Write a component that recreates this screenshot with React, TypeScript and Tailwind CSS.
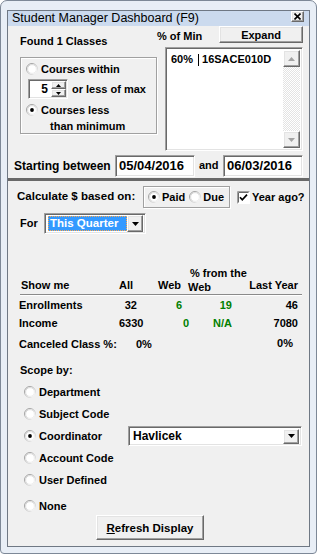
import React from 'react';

const raised =
  'bg-[#f0f0f0] border border-t-white border-l-white border-r-[#696969] border-b-[#696969] shadow-[inset_-1px_-1px_0_#a0a0a0,inset_1px_1px_0_#e3e3e3]';
const sunken =
  'bg-white border border-t-[#a0a0a0] border-l-[#a0a0a0] border-r-white border-b-white shadow-[inset_1px_1px_0_#696969,inset_-1px_-1px_0_#e3e3e3]';
const etched = 'border border-[#a0a0a0] shadow-[1px_1px_0_#ffffff,inset_1px_1px_0_#ffffff]';

const Radio = ({ checked = false }: { checked?: boolean }) => (
  <svg width="12" height="12" viewBox="0 0 12 12" className="shrink-0">
    <defs>
      <linearGradient id="rgOuter" x1="0" y1="0" x2="1" y2="1">
        <stop offset="0" stopColor="#8c8c8c" />
        <stop offset="0.55" stopColor="#c4c4c4" />
        <stop offset="1" stopColor="#ffffff" />
      </linearGradient>
      <linearGradient id="rgInner" x1="0" y1="0" x2="1" y2="1">
        <stop offset="0" stopColor="#d0d0d0" />
        <stop offset="1" stopColor="#f4f4f4" />
      </linearGradient>
    </defs>
    <circle cx="6" cy="6" r="5.5" fill="#ffffff" stroke="url(#rgOuter)" />
    <circle cx="6" cy="6" r="4.4" fill="none" stroke="url(#rgInner)" />
    {checked && <circle cx="6" cy="6" r="1.9" fill="#000000" />}
  </svg>
);

const Checkbox = () => (
  <svg width="13" height="13" viewBox="0 0 13 13" className="shrink-0">
    <rect x="0" y="0" width="13" height="13" fill="#ffffff" />
    <path d="M0.5 12.5 V0.5 H12.5" stroke="#a0a0a0" fill="none" />
    <path d="M1.5 11.5 V1.5 H11.5" stroke="#696969" fill="none" />
    <path d="M3 6.2 L5.3 8.8 L10 3.6" stroke="#000000" strokeWidth="1.7" fill="none" />
  </svg>
);

const Tri = ({ up = false, color = '#000000' }: { up?: boolean; color?: string }) => (
  <svg width="7" height="4" viewBox="0 0 7 4">
    <path d={up ? 'M0 4 L3.5 0 L7 4 Z' : 'M0 0 L7 0 L3.5 4 Z'} fill={color} />
  </svg>
);

const DropButton = ({ className = '' }: { className?: string }) => (
  <div className={`${raised} ${className} flex items-center justify-center shrink-0`}>
    <Tri />
  </div>
);

const Spinner = () => (
  <div className={`${sunken} w-[40px] h-[20px] flex`}>
    <div className="flex-1 text-right pr-[3px] leading-[18px] text-[12px]">5</div>
    <div className="w-[16px] flex flex-col p-[1px] pl-0">
      <div className={`${raised} flex-1 flex items-center justify-center`}>
        <svg width="5" height="3" viewBox="0 0 5 3">
          <path d="M0 3 L2.5 0 L5 3 Z" fill="#000" />
        </svg>
      </div>
      <div className={`${raised} flex-1 flex items-center justify-center`}>
        <svg width="5" height="3" viewBox="0 0 5 3">
          <path d="M0 0 L5 0 L2.5 3 Z" fill="#000" />
        </svg>
      </div>
    </div>
  </div>
);

const ScopeRow = ({ label, checked = false, className = '' }: { label: string; checked?: boolean; className?: string }) => (
  <div className={`flex items-center h-[14px] ml-[16px] ${className}`}>
    <Radio checked={checked} />
    <span className="ml-[3px] leading-[14px]">{label}</span>
  </div>
);

export default function App() {
  return (
    <div className="w-[317px] h-[554px] bg-white font-['Liberation_Sans',Arial,sans-serif] text-[11px] font-bold text-black">
      <div className="w-full h-full rounded-t-[7px] rounded-b-[4px] border border-[#7d8897] bg-[#e8eef6] pt-[9px] px-[6px] pb-[6px]">
        <div className="w-full h-full border border-[#6f7884] bg-[#f0f0f0] flex flex-col">
          {/* title bar */}
          <div className="h-[15px] bg-[#cbdaee] flex items-start pl-[4px] pr-[5px] shrink-0">
            <span className="font-normal text-[12.5px] leading-[15px]">Student Manager Dashboard (F9)</span>
            <div className={`${raised} ml-auto w-[13px] h-[11px] flex items-center justify-center`}>
              <svg width="7" height="7" viewBox="0 0 7 7">
                <path d="M0.5 0.5 L6.5 6.5 M6.5 0.5 L0.5 6.5" stroke="#000" strokeWidth="1.6" />
              </svg>
            </div>
          </div>

          {/* top section */}
          <div className="flex h-[125px]">
            <div className="w-[149px] pl-[12px] flex flex-col">
              <div className="mt-[8px] leading-[14px]">Found 1 Classes</div>
              <div className={`${etched} mt-[9px] w-[137px] h-[77px] flex flex-col pl-[5px]`}>
                <div className="flex items-center h-[14px] mt-[4px]">
                  <Radio />
                  <span className="ml-[3px]">Courses within</span>
                </div>
                <div className="flex items-center mt-[3px] ml-[2px]">
                  <Spinner />
                  <span className="ml-[4px]">or less of max</span>
                </div>
                <div className="flex items-center h-[14px] mt-[4px]">
                  <Radio checked />
                  <span className="ml-[3px]">Courses less</span>
                </div>
                <div className="h-[14px] leading-[14px] mt-[2px] ml-[24px]">than minimum</div>
              </div>
            </div>
            <div className="w-[146px] flex flex-col">
              <div className="flex items-start h-[17px]">
                <span className="mt-[3px] leading-[14px]">% of Min</span>
                <button className={`${raised} ml-auto w-[84px] h-[17px] leading-[14px] text-[11px] font-bold`}>
                  Expand
                </button>
              </div>
              <div className={`${sunken} mt-[4px] ml-[8px] w-[138px] h-[104px] flex p-[2px]`}>
                <div className="flex-1 flex items-start pt-[2px] pl-[3px]">
                  <span className="leading-[14px]">60%</span>
                  <span className="ml-[5px] mt-[2px] w-[1px] h-[12px] bg-black" />
                  <span className="ml-[3px] leading-[14px]">16SACE010D</span>
                </div>
                <div className="w-[17px] flex flex-col bg-[repeating-conic-gradient(#ffffff_0%_25%,#e3e3e3_0%_50%)] bg-size-[2px_2px]">
                  <div className={`${raised} h-[17px] flex items-center justify-center`}>
                    <Tri up color="#a3a3a3" />
                  </div>
                  <div className="flex-1" />
                  <div className={`${raised} h-[17px] flex items-center justify-center`}>
                    <Tri color="#a3a3a3" />
                  </div>
                </div>
              </div>
            </div>
          </div>

          {/* starting between */}
          <div className="flex items-center h-[22px] mt-[4px]">
            <span className="ml-[6px] w-[101px] text-[12px] leading-[14px]">Starting between</span>
            <div className={`${sunken} w-[80px] h-[22px] pl-[3px] text-[13px] leading-[20px]`}>05/04/2016</div>
            <span className="w-[28px] pl-[4px] -mt-[2px]">and</span>
            <div className={`${sunken} w-[80px] h-[22px] pl-[3px] text-[13px] leading-[20px]`}>06/03/2016</div>
          </div>

          <div className="mt-[1px] h-[3px] bg-[#696969] shrink-0" />

          {/* calculate */}
          <div className="flex items-center h-[22px] mt-[5px]">
            <span className="ml-[9px] w-[126px] text-[11.5px]">Calculate $ based on:</span>
            <div className={`${etched} w-[87px] h-[22px] flex items-center pl-[4px]`}>
              <Radio checked />
              <span className="ml-[2px]">Paid</span>
              <span className="ml-[4px]" />
              <Radio />
              <span className="ml-[2px]">Due</span>
            </div>
            <span className="ml-[7px]" />
            <Checkbox />
            <span className="ml-[2px]">Year ago?</span>
          </div>

          {/* for */}
          <div className="flex items-center h-[21px] mt-[5px]">
            <span className="ml-[12px] w-[24px]">For</span>
            <div className={`${sunken} w-[102px] h-[21px] flex items-center p-[2px]`}>
              <div className="ml-[1px] w-[81px] h-[15px] bg-[#3399ff] border border-dotted border-[#ffa94d] text-white text-[11.5px] leading-[13px] pl-[1px]">
                This Quarter
              </div>
              <DropButton className="ml-[0px] w-[16px] h-[17px]" />
            </div>
          </div>

          {/* table */}
          <div className="mt-[33px] ml-[182px] leading-[12px] h-[12px]">% from the</div>
          <div className="flex items-start h-[12px] leading-[12px]">
            <span className="ml-[13px] w-[98px]">Show me</span>
            <span className="w-[14px] text-right">All</span>
            <span className="ml-[25px]">Web</span>
            <span className="ml-[7px] mt-[2px]">Web</span>
            <span className="ml-auto mr-[11px]">Last Year</span>
          </div>
          <div className="mt-[3px] ml-[12px] w-[282px] border-t border-t-[#8a8a8a] border-b border-b-white" />

          <div className="flex items-center h-[14px] mt-[2px]">
            <span className="ml-[11px] w-[100px]">Enrollments</span>
            <span className="w-[18px] text-right">32</span>
            <span className="w-[45px] text-right text-[#008000]">6</span>
            <span className="w-[50px] text-right text-[#008000]">19</span>
            <span className="w-[66px] text-right">46</span>
          </div>
          <div className="flex items-center h-[14px] mt-[4px]">
            <span className="ml-[11px] w-[100px]">Income</span>
            <span className="w-[18px] text-right">6330</span>
            <span className="w-[52px] text-right text-[#008000]">0</span>
            <span className="w-[43px] text-right text-[#008000]">N/A</span>
            <span className="w-[66px] text-right">7080</span>
          </div>
          <div className="flex items-center h-[14px] mt-[7px]">
            <span className="ml-[11px] w-[117px]">Canceled Class %:</span>
            <span>0%</span>
            <span className="ml-auto mr-[16px] -mt-[2px]">0%</span>
          </div>

          {/* scope */}
          <div className="mt-[12px] ml-[12px] h-[14px] leading-[14px]">Scope by:</div>
          <ScopeRow label="Department" className="mt-[8px]" />
          <ScopeRow label="Subject Code" className="mt-[8px]" />
          <div className="flex items-center h-[20px] mt-[5px] ml-[16px]">
            <Radio checked />
            <span className="ml-[3px] w-[89px]">Coordinator</span>
            <div className={`${sunken} w-[174px] h-[20px] flex items-center pl-[4px] pr-[2px]`}>
              <span className="text-[12px] leading-[14px]">Havlicek</span>
              <DropButton className="ml-auto w-[16px] h-[15px]" />
            </div>
          </div>
          <ScopeRow label="Account Code" className="mt-[5px]" />
          <ScopeRow label="User Defined" className="mt-[8px]" />
          <ScopeRow label="None" className="mt-[12px]" />

          <button className={`${raised} mt-[2px] ml-[88px] w-[108px] h-[25px] text-[11.5px] font-bold leading-[14px]`}>
            <span className="underline">R</span>efresh Display
          </button>
        </div>
      </div>
    </div>
  );
}
